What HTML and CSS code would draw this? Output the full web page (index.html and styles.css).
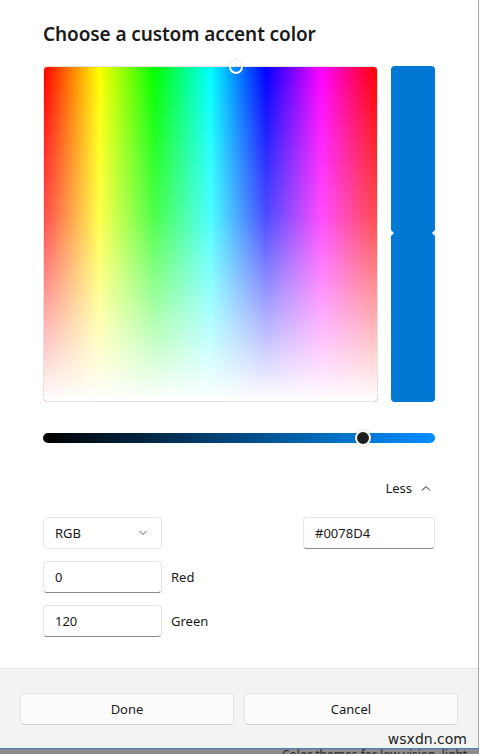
FILE: index.html
```html
<!DOCTYPE html>
<html lang="en">
<head>
    <meta charset="UTF-8">
    <meta name="viewport" content="width=device-width, initial-scale=1.0">
    <title>Choose a custom accent color</title>
    <link rel="stylesheet" href="styles.css">
</head>
<body>

    <div class="dialog">
        <div class="content">
            <h1>Choose a custom accent color</h1>

            <div class="picker">
                <div class="spectrum">
                    <div class="spectrum-fade"></div>
                    <span class="spectrum-thumb"></span>
                </div>
                <div class="preview">
                    <span class="notch notch-left"></span>
                    <span class="notch notch-right"></span>
                </div>
            </div>

            <div class="slider">
                <span class="slider-thumb"></span>
            </div>

            <div class="less-row">
                <button type="button" class="less">Less
                    <svg width="10" height="6" viewBox="0 0 10 6"><path d="M1 5.5 L5 1.5 L9 5.5" fill="none" stroke="#1a1a1a" stroke-width="1"/></svg>
                </button>
            </div>

            <div class="fields">
                <div class="field-row split">
                    <div class="select">
                        <span>RGB</span>
                        <svg width="10" height="6" viewBox="0 0 10 6"><path d="M1.5 1 L5 4.5 L8.5 1" fill="none" stroke="#5c5c5c" stroke-width="1"/></svg>
                    </div>
                    <div class="input hex">#0078D4</div>
                </div>
                <div class="field-row">
                    <div class="input">0</div>
                    <span class="label">Red</span>
                </div>
                <div class="field-row">
                    <div class="input">120</div>
                    <span class="label">Green</span>
                </div>
            </div>
        </div>

        <div class="footer">
            <button type="button" class="btn">Done</button>
            <button type="button" class="btn">Cancel</button>
            <span class="watermark">wsxdn.com</span>
        </div>
    </div>

    <div class="behind">
        <span>Color themes for low vision, light color</span>
    </div>

</body>
</html>
```

FILE: styles.css
```css
body {
    margin: 0;
    background-color: #fff;
    font-family: "Noto Sans", "Open Sans", sans-serif;
    color: #1a1a1a;
    overflow: hidden;
}
.dialog {
    width: 479px;
    height: 748px;
    border-right: 1px solid #a8a8a8;
    box-sizing: border-box;
    display: flex;
    flex-direction: column;
    background: #fff;
}
.content {
    flex: 1;
    padding: 20px 0 0 43px;
}
h1 {
    font-size: 19px;
    font-weight: 600;
    line-height: 28px;
    margin: 0 0 18px 0;
    letter-spacing: -0.1px;
}
.picker {
    display: flex;
    gap: 13px;
    width: 392px;
    height: 336px;
}
.spectrum {
    position: relative;
    width: 335px;
    flex: none;
    border-radius: 4px;
    border: 1px solid #e3e3e3;
    box-sizing: border-box;
    background: linear-gradient(to right, #ff0000 0%, #ffff00 16.67%, #00ff00 33.33%, #00ffff 50%, #0000ff 66.67%, #ff00ff 83.33%, #ff0000 100%);
}
.spectrum-fade {
    position: absolute;
    inset: 0;
    border-radius: 3px;
    background: linear-gradient(to bottom, rgba(255,255,255,0) 0%, rgba(255,255,255,0.3) 45%, rgba(255,255,255,1) 100%);
}
.spectrum-thumb {
    position: absolute;
    left: 185px;
    top: -7px;
    width: 10px;
    height: 10px;
    border: 2px solid #fff;
    border-radius: 50%;
    box-shadow: 0 0 0 1px rgba(0,0,0,0.08);
}
.preview {
    position: relative;
    width: 44px;
    flex: none;
    background-color: #0078d4;
    border-radius: 4px;
}
.notch {
    position: absolute;
    top: 163px;
    width: 0;
    height: 0;
    border-top: 4px solid transparent;
    border-bottom: 4px solid transparent;
}
.notch-left {
    left: -1px;
    border-left: 4px solid #fff;
}
.notch-right {
    right: -1px;
    border-right: 4px solid #fff;
}
.slider {
    position: relative;
    margin-top: 31px;
    width: 392px;
    height: 10px;
    border-radius: 5px;
    background: linear-gradient(to right, #000000 0%, #003a66 40%, #0070c4 75%, #008cff 100%);
}
.slider-thumb {
    position: absolute;
    left: 312px;
    top: -3px;
    width: 12px;
    height: 12px;
    background: #1f1f1f;
    border: 2px solid #fff;
    border-radius: 50%;
    box-shadow: 0 0 0 1px rgba(0,0,0,0.1);
}
.less-row {
    display: flex;
    justify-content: flex-end;
    margin-top: 35px;
    width: 392px;
}
.less {
    display: flex;
    align-items: center;
    gap: 9px;
    background: none;
    border: none;
    padding: 0 4px 0 0;
    font-family: inherit;
    font-size: 13px;
    color: #1a1a1a;
    height: 20px;
}
.fields {
    margin-top: 19px;
    display: flex;
    flex-direction: column;
    gap: 12px;
    width: 392px;
}
.field-row {
    display: flex;
    align-items: center;
    gap: 9px;
}
.field-row.split {
    justify-content: space-between;
}
.select, .input {
    width: 119px;
    height: 32px;
    box-sizing: border-box;
    border: 1px solid #e5e5e5;
    border-radius: 4px;
    background: #fff;
    font-size: 13px;
    display: flex;
    align-items: center;
    padding: 0 11px;
}
.select {
    justify-content: space-between;
    padding-right: 13px;
}
.input {
    border-bottom-color: #8a8a8a;
}
.input.hex {
    width: 132px;
}
.label {
    font-size: 13px;
}
.footer {
    position: relative;
    height: 80px;
    background-color: #f3f3f3;
    border-top: 1px solid #e5e5e5;
    box-sizing: border-box;
    display: flex;
    gap: 10px;
    padding: 24px 20px 0 20px;
}
.btn {
    flex: 1;
    height: 32px;
    background: #fbfbfb;
    border: 1px solid #e3e3e3;
    border-bottom-color: #cfcfcf;
    border-radius: 4px;
    font-family: inherit;
    font-size: 13px;
    color: #1a1a1a;
}
.watermark {
    position: absolute;
    right: 11px;
    bottom: 1px;
    font-family: "DejaVu Sans", sans-serif;
    font-size: 14px;
    color: #222;
    line-height: 15px;
}
.behind {
    height: 6px;
    border-top: 1px solid #3f7fc0;
    background: #8c8c8c;
    overflow: hidden;
    padding-left: 282px;
    font-size: 12px;
    line-height: 12px;
    color: #2b2b2b;
}
```
